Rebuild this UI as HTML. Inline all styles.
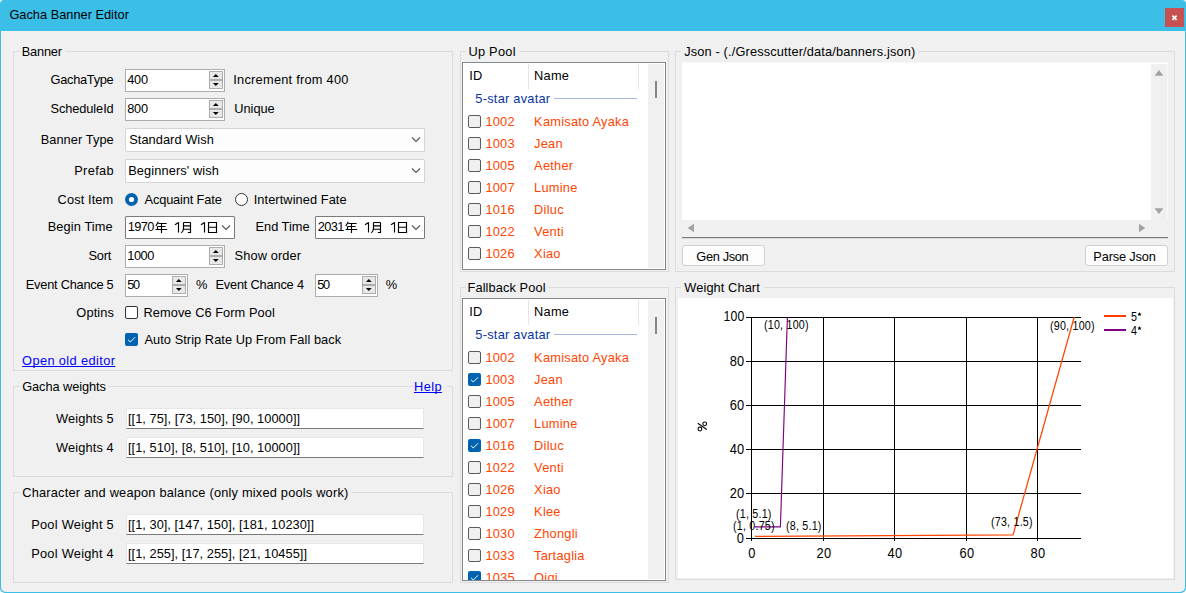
<!DOCTYPE html>
<html><head><meta charset="utf-8"><style>
html,body{margin:0;padding:0;width:1186px;height:593px;overflow:hidden;background:#fff;}
body{position:relative;font-family:"Liberation Sans",sans-serif;}
.t{position:absolute;font-family:"Liberation Sans",sans-serif;font-size:12.8px;line-height:1;white-space:pre;color:#000;letter-spacing:0.25px;}
</style></head><body>
<div style="position:absolute;left:0px;top:0px;width:1186px;height:593px;box-sizing:border-box;background:#3CBFE7;border-radius:4px 4px 5px 5px"></div><div style="position:absolute;left:1px;top:31px;width:1184px;height:561px;box-sizing:border-box;background:#F0F0F0;border-radius:0 0 5px 5px"></div><div class="t" style="top:9.10px;left:9.40px;letter-spacing:0;">Gacha Banner Editor</div><div style="position:absolute;left:1165px;top:8px;width:19px;height:19px;box-sizing:border-box;background:#C75050"></div><svg style="position:absolute;left:1165px;top:8px" width="19" height="19"><path d="M7.4 7.6 L11.6 11.8 M11.6 7.6 L7.4 11.8" stroke="#fff" stroke-width="1.7"/></svg><div style="position:absolute;left:13px;top:51px;width:440px;height:320px;box-sizing:border-box;border:1px solid #DCDCDC"></div><div style="position:absolute;left:20px;top:49px;width:46px;height:5px;box-sizing:border-box;background:#F0F0F0"></div><div class="t" style="top:46.10px;left:21.70px;letter-spacing:-0.181px;">Banner</div><div class="t" style="top:74.40px;right:1072.56px;letter-spacing:-0.279px;">GachaType</div><div style="position:absolute;left:125px;top:69px;width:100px;height:23px;box-sizing:border-box;border:1px solid #ADADAD;background:#fff"></div><div style="position:absolute;left:209px;top:71px;width:14px;height:9px;box-sizing:border-box;border:1px solid #ADADAD;background:#E8E8E8"></div><div style="position:absolute;left:209px;top:80px;width:14px;height:9px;box-sizing:border-box;border:1px solid #ADADAD;background:#E8E8E8"></div><svg style="position:absolute;left:209px;top:71px" width="14" height="18"><path d="M3.9 6 L6.8 3 L9.7 6 Z" fill="#000"/><path d="M3.9 12 L9.7 12 L6.8 15 Z" fill="#000"/></svg><div class="t" style="top:74.40px;left:127.30px;letter-spacing:-0.317px;">400</div><div class="t" style="top:74.40px;left:233.30px;letter-spacing:0.245px;">Increment from 400</div><div class="t" style="top:103.40px;right:1072.37px;letter-spacing:-0.091px;">ScheduleId</div><div style="position:absolute;left:125px;top:98px;width:100px;height:23px;box-sizing:border-box;border:1px solid #ADADAD;background:#fff"></div><div style="position:absolute;left:209px;top:100px;width:14px;height:9px;box-sizing:border-box;border:1px solid #ADADAD;background:#E8E8E8"></div><div style="position:absolute;left:209px;top:109px;width:14px;height:9px;box-sizing:border-box;border:1px solid #ADADAD;background:#E8E8E8"></div><svg style="position:absolute;left:209px;top:100px" width="14" height="18"><path d="M3.9 6 L6.8 3 L9.7 6 Z" fill="#000"/><path d="M3.9 12 L9.7 12 L6.8 15 Z" fill="#000"/></svg><div class="t" style="top:103.40px;left:127.30px;letter-spacing:-0.317px;">800</div><div class="t" style="top:103.40px;left:234.30px;letter-spacing:-0.027px;">Unique</div><div class="t" style="top:133.60px;right:1072.21px;letter-spacing:0.075px;">Banner Type</div><div style="position:absolute;left:125px;top:128px;width:300px;height:24px;box-sizing:border-box;border:1px solid #D4D4D4;background:#FDFDFD;border-radius:1px"></div><svg style="position:absolute;left:411px;top:134.5px" width="11" height="8"><path d="M1 2.5 L5 6.5 L9 2.5" fill="none" stroke="#555" stroke-width="1.1"/></svg><div class="t" style="top:133.60px;left:129.20px;letter-spacing:0.057px;">Standard Wish</div><div class="t" style="top:165.10px;right:1071.92px;letter-spacing:0.363px;">Prefab</div><div style="position:absolute;left:125px;top:159px;width:300px;height:24px;box-sizing:border-box;border:1px solid #D4D4D4;background:#FDFDFD;border-radius:1px"></div><svg style="position:absolute;left:411px;top:165.5px" width="11" height="8"><path d="M1 2.5 L5 6.5 L9 2.5" fill="none" stroke="#555" stroke-width="1.1"/></svg><div class="t" style="top:165.30px;left:128.20px;letter-spacing:0.107px;">Beginners' wish</div><div class="t" style="top:194.40px;right:1072.63px;letter-spacing:0.113px;">Cost Item</div><svg style="position:absolute;left:125px;top:193px" width="13" height="13"><circle cx="6.5" cy="6.5" r="6.5" fill="#0063B1"/><circle cx="6.5" cy="6.5" r="2.6" fill="#fff"/></svg><div class="t" style="top:194.40px;left:144.50px;letter-spacing:-0.137px;">Acquaint Fate</div><svg style="position:absolute;left:235px;top:193px" width="13" height="13"><circle cx="6.5" cy="6.5" r="6" fill="#fff" stroke="#333" stroke-width="1"/></svg><div class="t" style="top:194.40px;left:253.70px;letter-spacing:0.077px;">Intertwined Fate</div><div class="t" style="top:221.10px;right:1073.16px;letter-spacing:0.119px;">Begin Time</div><div class="t" style="top:221.10px;right:876.49px;letter-spacing:-0.010px;">End Time</div><div style="position:absolute;left:125px;top:216px;width:110px;height:23px;box-sizing:border-box;border:1px solid #7A7A7A;background:#fff;border-radius:1px"></div><div class="t" style="top:221.10px;left:127.80px;letter-spacing:-0.617px;">1970</div><svg style="position:absolute;left:155px;top:222px;overflow:visible" width="13" height="11"><path d="M3.3 -0.2 L0.9 4 M3.3 1.5 H11.6 M2.5 4.5 H10.6 M2.5 4.5 V7.5 M0.6 7.5 H12.2 M6.5 1.5 V11" fill="none" stroke="#000" stroke-width="1.15"/></svg><svg style="position:absolute;left:174px;top:222px;overflow:visible" width="6" height="11"><path d="M4.5 0.3 V10.5 M4.5 0.5 L1 2.8" fill="none" stroke="#000" stroke-width="1.15"/></svg><svg style="position:absolute;left:181px;top:222px;overflow:visible" width="11" height="11"><path d="M2.5 0.5 V6 Q2.5 9.2 0.3 10.9 M2.5 0.5 H9.5 M9.5 0.5 V10.5 H6.8 M2.5 3.8 H9.5 M2.5 7.2 H9.5" fill="none" stroke="#000" stroke-width="1.15"/></svg><svg style="position:absolute;left:200px;top:222px;overflow:visible" width="6" height="11"><path d="M4.5 0.3 V10.5 M4.5 0.5 L1 2.8" fill="none" stroke="#000" stroke-width="1.15"/></svg><svg style="position:absolute;left:208px;top:222px;overflow:visible" width="10" height="11"><path d="M0.5 0.5 H8.5 V10.5 H0.5 Z M0.5 5.2 H8.5" fill="none" stroke="#000" stroke-width="1.15"/></svg><svg style="position:absolute;left:221px;top:224px" width="11" height="8"><path d="M1 1.5 L5 5.5 L9 1.5" fill="none" stroke="#555" stroke-width="1.1"/></svg><div style="position:absolute;left:315px;top:216px;width:110px;height:23px;box-sizing:border-box;border:1px solid #7A7A7A;background:#fff;border-radius:1px"></div><div class="t" style="top:221.10px;left:317.80px;letter-spacing:-0.617px;">2031</div><svg style="position:absolute;left:345px;top:222px;overflow:visible" width="13" height="11"><path d="M3.3 -0.2 L0.9 4 M3.3 1.5 H11.6 M2.5 4.5 H10.6 M2.5 4.5 V7.5 M0.6 7.5 H12.2 M6.5 1.5 V11" fill="none" stroke="#000" stroke-width="1.15"/></svg><svg style="position:absolute;left:364px;top:222px;overflow:visible" width="6" height="11"><path d="M4.5 0.3 V10.5 M4.5 0.5 L1 2.8" fill="none" stroke="#000" stroke-width="1.15"/></svg><svg style="position:absolute;left:371px;top:222px;overflow:visible" width="11" height="11"><path d="M2.5 0.5 V6 Q2.5 9.2 0.3 10.9 M2.5 0.5 H9.5 M9.5 0.5 V10.5 H6.8 M2.5 3.8 H9.5 M2.5 7.2 H9.5" fill="none" stroke="#000" stroke-width="1.15"/></svg><svg style="position:absolute;left:390px;top:222px;overflow:visible" width="6" height="11"><path d="M4.5 0.3 V10.5 M4.5 0.5 L1 2.8" fill="none" stroke="#000" stroke-width="1.15"/></svg><svg style="position:absolute;left:398px;top:222px;overflow:visible" width="10" height="11"><path d="M0.5 0.5 H8.5 V10.5 H0.5 Z M0.5 5.2 H8.5" fill="none" stroke="#000" stroke-width="1.15"/></svg><svg style="position:absolute;left:411px;top:224px" width="11" height="8"><path d="M1 1.5 L5 5.5 L9 1.5" fill="none" stroke="#555" stroke-width="1.1"/></svg><div class="t" style="top:250.40px;right:1074.85px;letter-spacing:-0.205px;">Sort</div><div style="position:absolute;left:125px;top:245px;width:100px;height:23px;box-sizing:border-box;border:1px solid #ADADAD;background:#fff"></div><div style="position:absolute;left:209px;top:247px;width:14px;height:9px;box-sizing:border-box;border:1px solid #ADADAD;background:#E8E8E8"></div><div style="position:absolute;left:209px;top:256px;width:14px;height:9px;box-sizing:border-box;border:1px solid #ADADAD;background:#E8E8E8"></div><svg style="position:absolute;left:209px;top:247px" width="14" height="18"><path d="M3.9 6 L6.8 3 L9.7 6 Z" fill="#000"/><path d="M3.9 12 L9.7 12 L6.8 15 Z" fill="#000"/></svg><div class="t" style="top:250.40px;left:127.30px;letter-spacing:-0.484px;">1000</div><div class="t" style="top:250.40px;left:234.50px;letter-spacing:0.125px;">Show order</div><div class="t" style="top:279.40px;right:1072.52px;letter-spacing:-0.242px;">Event Chance 5</div><div style="position:absolute;left:125px;top:274px;width:63px;height:23px;box-sizing:border-box;border:1px solid #ADADAD;background:#fff"></div><div style="position:absolute;left:172px;top:276px;width:14px;height:9px;box-sizing:border-box;border:1px solid #ADADAD;background:#E8E8E8"></div><div style="position:absolute;left:172px;top:285px;width:14px;height:9px;box-sizing:border-box;border:1px solid #ADADAD;background:#E8E8E8"></div><svg style="position:absolute;left:172px;top:276px" width="14" height="18"><path d="M3.9 6 L6.8 3 L9.7 6 Z" fill="#000"/><path d="M3.9 12 L9.7 12 L6.8 15 Z" fill="#000"/></svg><div class="t" style="top:279.40px;left:127.30px;letter-spacing:-1.417px;">50</div><div class="t" style="top:279.40px;left:196.00px;">%</div><div class="t" style="top:279.40px;right:882.17px;letter-spacing:-0.188px;">Event Chance 4</div><div style="position:absolute;left:315px;top:274px;width:63px;height:23px;box-sizing:border-box;border:1px solid #ADADAD;background:#fff"></div><div style="position:absolute;left:362px;top:276px;width:14px;height:9px;box-sizing:border-box;border:1px solid #ADADAD;background:#E8E8E8"></div><div style="position:absolute;left:362px;top:285px;width:14px;height:9px;box-sizing:border-box;border:1px solid #ADADAD;background:#E8E8E8"></div><svg style="position:absolute;left:362px;top:276px" width="14" height="18"><path d="M3.9 6 L6.8 3 L9.7 6 Z" fill="#000"/><path d="M3.9 12 L9.7 12 L6.8 15 Z" fill="#000"/></svg><div class="t" style="top:279.40px;left:317.30px;letter-spacing:-1.417px;">50</div><div class="t" style="top:279.40px;left:385.70px;">%</div><div class="t" style="top:307.10px;right:1071.86px;letter-spacing:0.143px;">Optins</div><div style="position:absolute;left:125px;top:306px;width:13px;height:13px;box-sizing:border-box;border:1px solid #333;border-radius:2px;background:#fff"></div><div class="t" style="top:307.10px;left:143.50px;letter-spacing:0.061px;">Remove C6 Form Pool</div><div style="position:absolute;left:125px;top:333px;width:13px;height:13px;box-sizing:border-box;background:#0063B1;border-radius:2px"></div><svg style="position:absolute;left:125px;top:333px" width="13" height="13"><path d="M3 6.8 L5.3 9 L10 4.3" fill="none" stroke="#fff" stroke-width="1"/></svg><div class="t" style="top:333.70px;left:144.50px;letter-spacing:0.054px;">Auto Strip Rate Up From Fall back</div><div class="t" style="top:354.80px;left:22.10px;color:#0000FF;letter-spacing:0.383px;text-decoration:underline;text-decoration-skip-ink:none;">Open old editor</div><div style="position:absolute;left:13px;top:386px;width:440px;height:91px;box-sizing:border-box;border:1px solid #DCDCDC"></div><div style="position:absolute;left:20px;top:384px;width:88px;height:5px;box-sizing:border-box;background:#F0F0F0"></div><div class="t" style="top:381.10px;left:22.20px;letter-spacing:-0.071px;">Gacha weights</div><div style="position:absolute;left:413px;top:380px;width:34px;height:14px;box-sizing:border-box;background:#F0F0F0"></div><div class="t" style="top:381.10px;left:414.00px;color:#0000FF;letter-spacing:0.399px;text-decoration:underline;text-decoration-skip-ink:none;">Help</div><div class="t" style="top:413.10px;right:1072.16px;letter-spacing:0.119px;">Weights 5</div><div style="position:absolute;left:126px;top:408px;width:298px;height:21px;box-sizing:border-box;background:#fff;border:1px solid #E6E6E6;border-bottom:1px solid #7A7A7A"></div><div class="t" style="top:413.10px;left:128.00px;letter-spacing:0.041px;">[[1, 75], [73, 150], [90, 10000]]</div><div class="t" style="top:442.10px;right:1072.16px;letter-spacing:0.119px;">Weights 4</div><div style="position:absolute;left:126px;top:437px;width:298px;height:21px;box-sizing:border-box;background:#fff;border:1px solid #E6E6E6;border-bottom:1px solid #7A7A7A"></div><div class="t" style="top:442.10px;left:128.00px;letter-spacing:0.041px;">[[1, 510], [8, 510], [10, 10000]]</div><div style="position:absolute;left:13px;top:492px;width:440px;height:91px;box-sizing:border-box;border:1px solid #DCDCDC"></div><div style="position:absolute;left:20px;top:490px;width:332px;height:5px;box-sizing:border-box;background:#F0F0F0"></div><div class="t" style="top:487.10px;left:22.20px;letter-spacing:0.201px;">Character and weapon balance (only mixed pools work)</div><div class="t" style="top:518.90px;right:1072.03px;letter-spacing:0.257px;">Pool Weight 5</div><div style="position:absolute;left:126px;top:514px;width:298px;height:21px;box-sizing:border-box;background:#fff;border:1px solid #E6E6E6;border-bottom:1px solid #7A7A7A"></div><div class="t" style="top:518.90px;left:128.00px;letter-spacing:0.029px;">[[1, 30], [147, 150], [181, 10230]]</div><div class="t" style="top:547.90px;right:1072.03px;letter-spacing:0.257px;">Pool Weight 4</div><div style="position:absolute;left:126px;top:543px;width:298px;height:21px;box-sizing:border-box;background:#fff;border:1px solid #E6E6E6;border-bottom:1px solid #7A7A7A"></div><div class="t" style="top:547.90px;left:128.00px;letter-spacing:0.033px;">[[1, 255], [17, 255], [21, 10455]]</div><div style="position:absolute;left:460px;top:51px;width:209px;height:221px;box-sizing:border-box;border:1px solid #DCDCDC"></div><div style="position:absolute;left:466px;top:49px;width:53px;height:5px;box-sizing:border-box;background:#F0F0F0"></div><div class="t" style="top:46.10px;left:468.40px;letter-spacing:0.269px;">Up Pool</div><div style="position:absolute;left:462px;top:62px;width:204px;height:208px;box-sizing:border-box;border:1px solid #828790;background:#fff;overflow:hidden"><div style="position:absolute;left:65px;top:1px;width:1px;height:25px;box-sizing:border-box;background:#E5E5E5"></div><div style="position:absolute;left:175px;top:1px;width:1px;height:25px;box-sizing:border-box;background:#E5E5E5"></div><div class="t" style="left:6.30px;top:7.10px;color:#000">ID</div><div class="t" style="left:71.10px;top:7.10px;color:#000">Name</div><div class="t" style="left:12.30px;top:30.10px;color:#0A34A0">5-star avatar</div><div style="position:absolute;left:91px;top:35px;width:83px;height:1px;box-sizing:border-box;background:#A6B6DF"></div><div style="position:absolute;left:5px;top:52px;width:13px;height:13px;box-sizing:border-box;border:1px solid #5A5A5A;border-radius:2px;background:#F0F0F0"></div><div class="t" style="left:22.40px;top:53.10px;color:#FF4500">1002</div><div class="t" style="left:71.10px;top:53.10px;color:#FF4500">Kamisato Ayaka</div><div style="position:absolute;left:5px;top:74px;width:13px;height:13px;box-sizing:border-box;border:1px solid #5A5A5A;border-radius:2px;background:#F0F0F0"></div><div class="t" style="left:22.40px;top:75.10px;color:#FF4500">1003</div><div class="t" style="left:71.10px;top:75.10px;color:#FF4500">Jean</div><div style="position:absolute;left:5px;top:96px;width:13px;height:13px;box-sizing:border-box;border:1px solid #5A5A5A;border-radius:2px;background:#F0F0F0"></div><div class="t" style="left:22.40px;top:97.10px;color:#FF4500">1005</div><div class="t" style="left:71.10px;top:97.10px;color:#FF4500">Aether</div><div style="position:absolute;left:5px;top:118px;width:13px;height:13px;box-sizing:border-box;border:1px solid #5A5A5A;border-radius:2px;background:#F0F0F0"></div><div class="t" style="left:22.40px;top:119.10px;color:#FF4500">1007</div><div class="t" style="left:71.10px;top:119.10px;color:#FF4500">Lumine</div><div style="position:absolute;left:5px;top:140px;width:13px;height:13px;box-sizing:border-box;border:1px solid #5A5A5A;border-radius:2px;background:#F0F0F0"></div><div class="t" style="left:22.40px;top:141.10px;color:#FF4500">1016</div><div class="t" style="left:71.10px;top:141.10px;color:#FF4500">Diluc</div><div style="position:absolute;left:5px;top:162px;width:13px;height:13px;box-sizing:border-box;border:1px solid #5A5A5A;border-radius:2px;background:#F0F0F0"></div><div class="t" style="left:22.40px;top:163.10px;color:#FF4500">1022</div><div class="t" style="left:71.10px;top:163.10px;color:#FF4500">Venti</div><div style="position:absolute;left:5px;top:184px;width:13px;height:13px;box-sizing:border-box;border:1px solid #5A5A5A;border-radius:2px;background:#F0F0F0"></div><div class="t" style="left:22.40px;top:185.10px;color:#FF4500">1026</div><div class="t" style="left:71.10px;top:185.10px;color:#FF4500">Xiao</div><div style="position:absolute;left:5px;top:206px;width:13px;height:13px;box-sizing:border-box;border:1px solid #5A5A5A;border-radius:2px;background:#F0F0F0"></div><div class="t" style="left:22.40px;top:207.10px;color:#FF4500">1029</div><div class="t" style="left:71.10px;top:207.10px;color:#FF4500">Klee</div><div style="position:absolute;left:185px;top:1px;width:16px;height:204px;box-sizing:border-box;background:#F0F0F0"></div><div style="position:absolute;left:192px;top:18px;width:2px;height:17px;box-sizing:border-box;background:#858585"></div></div><div style="position:absolute;left:460px;top:287px;width:209px;height:296px;box-sizing:border-box;border:1px solid #DCDCDC"></div><div style="position:absolute;left:466px;top:285px;width:82px;height:5px;box-sizing:border-box;background:#F0F0F0"></div><div class="t" style="top:282.10px;left:467.50px;letter-spacing:0.102px;">Fallback Pool</div><div style="position:absolute;left:462px;top:298px;width:204px;height:283px;box-sizing:border-box;border:1px solid #828790;background:#fff;overflow:hidden"><div style="position:absolute;left:65px;top:1px;width:1px;height:25px;box-sizing:border-box;background:#E5E5E5"></div><div style="position:absolute;left:175px;top:1px;width:1px;height:25px;box-sizing:border-box;background:#E5E5E5"></div><div class="t" style="left:6.30px;top:7.10px;color:#000">ID</div><div class="t" style="left:71.10px;top:7.10px;color:#000">Name</div><div class="t" style="left:12.30px;top:30.10px;color:#0A34A0">5-star avatar</div><div style="position:absolute;left:91px;top:35px;width:83px;height:1px;box-sizing:border-box;background:#A6B6DF"></div><div style="position:absolute;left:5px;top:52px;width:13px;height:13px;box-sizing:border-box;border:1px solid #5A5A5A;border-radius:2px;background:#F0F0F0"></div><div class="t" style="left:22.40px;top:53.10px;color:#FF4500">1002</div><div class="t" style="left:71.10px;top:53.10px;color:#FF4500">Kamisato Ayaka</div><div style="position:absolute;left:5px;top:74px;width:13px;height:13px;box-sizing:border-box;background:#0063B1;border-radius:2px"></div><svg style="position:absolute;left:5px;top:74px" width="13" height="13"><path d="M3 6.8 L5.3 9 L10 4.3" fill="none" stroke="#fff" stroke-width="1"/></svg><div class="t" style="left:22.40px;top:75.10px;color:#FF4500">1003</div><div class="t" style="left:71.10px;top:75.10px;color:#FF4500">Jean</div><div style="position:absolute;left:5px;top:96px;width:13px;height:13px;box-sizing:border-box;border:1px solid #5A5A5A;border-radius:2px;background:#F0F0F0"></div><div class="t" style="left:22.40px;top:97.10px;color:#FF4500">1005</div><div class="t" style="left:71.10px;top:97.10px;color:#FF4500">Aether</div><div style="position:absolute;left:5px;top:118px;width:13px;height:13px;box-sizing:border-box;border:1px solid #5A5A5A;border-radius:2px;background:#F0F0F0"></div><div class="t" style="left:22.40px;top:119.10px;color:#FF4500">1007</div><div class="t" style="left:71.10px;top:119.10px;color:#FF4500">Lumine</div><div style="position:absolute;left:5px;top:140px;width:13px;height:13px;box-sizing:border-box;background:#0063B1;border-radius:2px"></div><svg style="position:absolute;left:5px;top:140px" width="13" height="13"><path d="M3 6.8 L5.3 9 L10 4.3" fill="none" stroke="#fff" stroke-width="1"/></svg><div class="t" style="left:22.40px;top:141.10px;color:#FF4500">1016</div><div class="t" style="left:71.10px;top:141.10px;color:#FF4500">Diluc</div><div style="position:absolute;left:5px;top:162px;width:13px;height:13px;box-sizing:border-box;border:1px solid #5A5A5A;border-radius:2px;background:#F0F0F0"></div><div class="t" style="left:22.40px;top:163.10px;color:#FF4500">1022</div><div class="t" style="left:71.10px;top:163.10px;color:#FF4500">Venti</div><div style="position:absolute;left:5px;top:184px;width:13px;height:13px;box-sizing:border-box;border:1px solid #5A5A5A;border-radius:2px;background:#F0F0F0"></div><div class="t" style="left:22.40px;top:185.10px;color:#FF4500">1026</div><div class="t" style="left:71.10px;top:185.10px;color:#FF4500">Xiao</div><div style="position:absolute;left:5px;top:206px;width:13px;height:13px;box-sizing:border-box;border:1px solid #5A5A5A;border-radius:2px;background:#F0F0F0"></div><div class="t" style="left:22.40px;top:207.10px;color:#FF4500">1029</div><div class="t" style="left:71.10px;top:207.10px;color:#FF4500">Klee</div><div style="position:absolute;left:5px;top:228px;width:13px;height:13px;box-sizing:border-box;border:1px solid #5A5A5A;border-radius:2px;background:#F0F0F0"></div><div class="t" style="left:22.40px;top:229.10px;color:#FF4500">1030</div><div class="t" style="left:71.10px;top:229.10px;color:#FF4500">Zhongli</div><div style="position:absolute;left:5px;top:250px;width:13px;height:13px;box-sizing:border-box;border:1px solid #5A5A5A;border-radius:2px;background:#F0F0F0"></div><div class="t" style="left:22.40px;top:251.10px;color:#FF4500">1033</div><div class="t" style="left:71.10px;top:251.10px;color:#FF4500">Tartaglia</div><div style="position:absolute;left:5px;top:272px;width:13px;height:13px;box-sizing:border-box;background:#0063B1;border-radius:2px"></div><svg style="position:absolute;left:5px;top:272px" width="13" height="13"><path d="M3 6.8 L5.3 9 L10 4.3" fill="none" stroke="#fff" stroke-width="1"/></svg><div class="t" style="left:22.40px;top:273.10px;color:#FF4500">1035</div><div class="t" style="left:71.10px;top:273.10px;color:#FF4500">Qiqi</div><div style="position:absolute;left:5px;top:294px;width:13px;height:13px;box-sizing:border-box;border:1px solid #5A5A5A;border-radius:2px;background:#F0F0F0"></div><div class="t" style="left:22.40px;top:295.10px;color:#FF4500">1037</div><div class="t" style="left:71.10px;top:295.10px;color:#FF4500">Xiangling</div><div style="position:absolute;left:185px;top:1px;width:16px;height:279px;box-sizing:border-box;background:#F0F0F0"></div><div style="position:absolute;left:192px;top:18px;width:2px;height:17px;box-sizing:border-box;background:#858585"></div></div><div style="position:absolute;left:675px;top:51px;width:500px;height:221px;box-sizing:border-box;border:1px solid #DCDCDC"></div><div style="position:absolute;left:681px;top:49px;width:238px;height:5px;box-sizing:border-box;background:#F0F0F0"></div><div class="t" style="top:46.10px;left:684.20px;letter-spacing:0.144px;">Json - (./Gresscutter/data/banners.json)</div><div style="position:absolute;left:682px;top:62px;width:486px;height:175px;box-sizing:border-box;background:#fff;border-top:1px solid #F8F8F8;border-right:1px solid #F8F8F8"></div><div style="position:absolute;left:682px;top:237px;width:486px;height:1px;box-sizing:border-box;background:#7A7A7A"></div><div style="position:absolute;left:682px;top:238px;width:486px;height:1px;box-sizing:border-box;background:#DADADA"></div><div style="position:absolute;left:1151px;top:64px;width:16px;height:173px;box-sizing:border-box;background:#F0F0F0"></div><div style="position:absolute;left:682px;top:220px;width:486px;height:17px;box-sizing:border-box;background:#F0F0F0"></div><svg style="position:absolute;left:1151px;top:64px" width="16" height="173" fill="#A3A3A3"><path d="M3.6 11.8 L8 6 L12.4 11.8 Z M3.6 144.2 L12.4 144.2 L8 150 Z"/><path d="M-462 160 L-456 156 L-456 164 Z"/></svg><svg style="position:absolute;left:682px;top:220px" width="486" height="17" fill="#A3A3A3"><path d="M5.6 8 L12 3.8 L12 12.2 Z M457 3.8 L463.3 8 L457 12.2 Z"/></svg><div style="position:absolute;left:682px;top:245px;width:83px;height:21px;box-sizing:border-box;background:#FDFDFD;border:1px solid #D0D0D0;border-radius:3px"></div><div class="t" style="top:251.10px;left:696.30px;letter-spacing:-0.351px;">Gen Json</div><div style="position:absolute;left:1085px;top:245px;width:83px;height:21px;box-sizing:border-box;background:#FDFDFD;border:1px solid #D0D0D0;border-radius:3px"></div><div class="t" style="top:251.10px;left:1093.30px;letter-spacing:-0.155px;">Parse Json</div><div style="position:absolute;left:675px;top:287px;width:500px;height:293px;box-sizing:border-box;border:1px solid #DCDCDC"></div><div style="position:absolute;left:681px;top:285px;width:83px;height:5px;box-sizing:border-box;background:#F0F0F0"></div><div class="t" style="top:282.10px;left:684.30px;letter-spacing:0.092px;">Weight Chart</div><div style="position:absolute;left:678px;top:298px;width:495px;height:280px;box-sizing:border-box;background:#fff"></div><svg style="position:absolute;left:0;top:0" width="1186" height="593"><path d="M746 317.5 H1081" stroke="#000" stroke-width="1"/><path d="M746 361.5 H1081" stroke="#000" stroke-width="1"/><path d="M746 405.5 H1081" stroke="#000" stroke-width="1"/><path d="M746 449.5 H1081" stroke="#000" stroke-width="1"/><path d="M746 493.5 H1081" stroke="#000" stroke-width="1"/><path d="M746 538.5 H1081" stroke="#000" stroke-width="1"/><path d="M751.5 317 V541" stroke="#000" stroke-width="1"/><path d="M823.5 317 V541" stroke="#000" stroke-width="1"/><path d="M894.5 317 V541" stroke="#000" stroke-width="1"/><path d="M966.5 317 V541" stroke="#000" stroke-width="1"/><path d="M1037.5 317 V541" stroke="#000" stroke-width="1"/><polyline points="755,536.3 1013,534.9 1074.2,317" fill="none" stroke="#FF4500" stroke-width="1.25"/><polyline points="755,526.8 780.4,526.8 787.4,317" fill="none" stroke="#800080" stroke-width="1.15"/><path d="M1104 316 H1126" stroke="#FF3C00" stroke-width="2"/><path d="M1104 330 H1126" stroke="#800080" stroke-width="2"/></svg><div class="t" style="right:441.60px;top:308.85px;font-size:14.3px;transform:scaleX(0.86);transform-origin:100% 0;color:#000">100</div><div class="t" style="right:441.60px;top:353.65px;font-size:14.3px;transform:scaleX(0.9);transform-origin:100% 0;color:#000">80</div><div class="t" style="right:441.60px;top:397.65px;font-size:14.3px;transform:scaleX(0.9);transform-origin:100% 0;color:#000">60</div><div class="t" style="right:441.60px;top:441.65px;font-size:14.3px;transform:scaleX(0.9);transform-origin:100% 0;color:#000">40</div><div class="t" style="right:441.60px;top:485.65px;font-size:14.3px;transform:scaleX(0.9);transform-origin:100% 0;color:#000">20</div><div class="t" style="right:441.60px;top:530.65px;font-size:14.3px;transform:scaleX(0.9);transform-origin:100% 0;color:#000">0</div><div class="t" style="left:701.80px;width:100px;text-align:center;top:546.25px;font-size:14.3px;transform:scaleX(0.9);color:#000">0</div><div class="t" style="left:773.80px;width:100px;text-align:center;top:546.25px;font-size:14.3px;transform:scaleX(0.9);color:#000">20</div><div class="t" style="left:844.80px;width:100px;text-align:center;top:546.25px;font-size:14.3px;transform:scaleX(0.9);color:#000">40</div><div class="t" style="left:916.80px;width:100px;text-align:center;top:546.25px;font-size:14.3px;transform:scaleX(0.9);color:#000">60</div><div class="t" style="left:987.80px;width:100px;text-align:center;top:546.25px;font-size:14.3px;transform:scaleX(0.9);color:#000">80</div><div class="t" style="left:764.20px;top:319.10px;font-size:12.3px;transform:scaleX(0.87);transform-origin:0 0;color:#000">(10, 100)</div><div class="t" style="left:1050.00px;top:320.00px;font-size:12.3px;transform:scaleX(0.87);transform-origin:0 0;color:#000">(90, 100)</div><div class="t" style="left:735.80px;top:508.20px;font-size:12.3px;transform:scaleX(0.87);transform-origin:0 0;color:#000">(1, 5.1)</div><div class="t" style="left:732.60px;top:520.40px;font-size:12.3px;transform:scaleX(0.87);transform-origin:0 0;color:#000">(1, 0.75)</div><div class="t" style="left:786.00px;top:520.40px;font-size:12.3px;transform:scaleX(0.87);transform-origin:0 0;color:#000">(8, 5.1)</div><div class="t" style="left:991.00px;top:516.40px;font-size:12.3px;transform:scaleX(0.87);transform-origin:0 0;color:#000">(73, 1.5)</div><div class="t" style="left:1130.60px;top:310.78px;font-size:12.5px;transform:scaleX(0.86);transform-origin:0 0;color:#000">5</div><div class="t" style="left:1130.60px;top:324.78px;font-size:12.5px;transform:scaleX(0.86);transform-origin:0 0;color:#000">4</div><svg style="position:absolute;left:1137px;top:312px" width="6" height="5"><path d="M2.5 0.3 L3.2 1.6 L4.6 1.7 L3.5 2.6 L3.9 4 L2.5 3.2 L1.1 4 L1.5 2.6 L0.4 1.7 L1.8 1.6 Z" fill="#000"/></svg><svg style="position:absolute;left:1137px;top:326px" width="6" height="5"><path d="M2.5 0.3 L3.2 1.6 L4.6 1.7 L3.5 2.6 L3.9 4 L2.5 3.2 L1.1 4 L1.5 2.6 L0.4 1.7 L1.8 1.6 Z" fill="#000"/></svg><svg style="position:absolute;left:690px;top:415px" width="25" height="22" fill="none" stroke="#000" stroke-width="1.05"><circle cx="14.7" cy="8.8" r="1.9"/><circle cx="9.9" cy="14" r="1.9"/><path d="M7.8 8.3 L16.7 14.5"/></svg></body></html>
